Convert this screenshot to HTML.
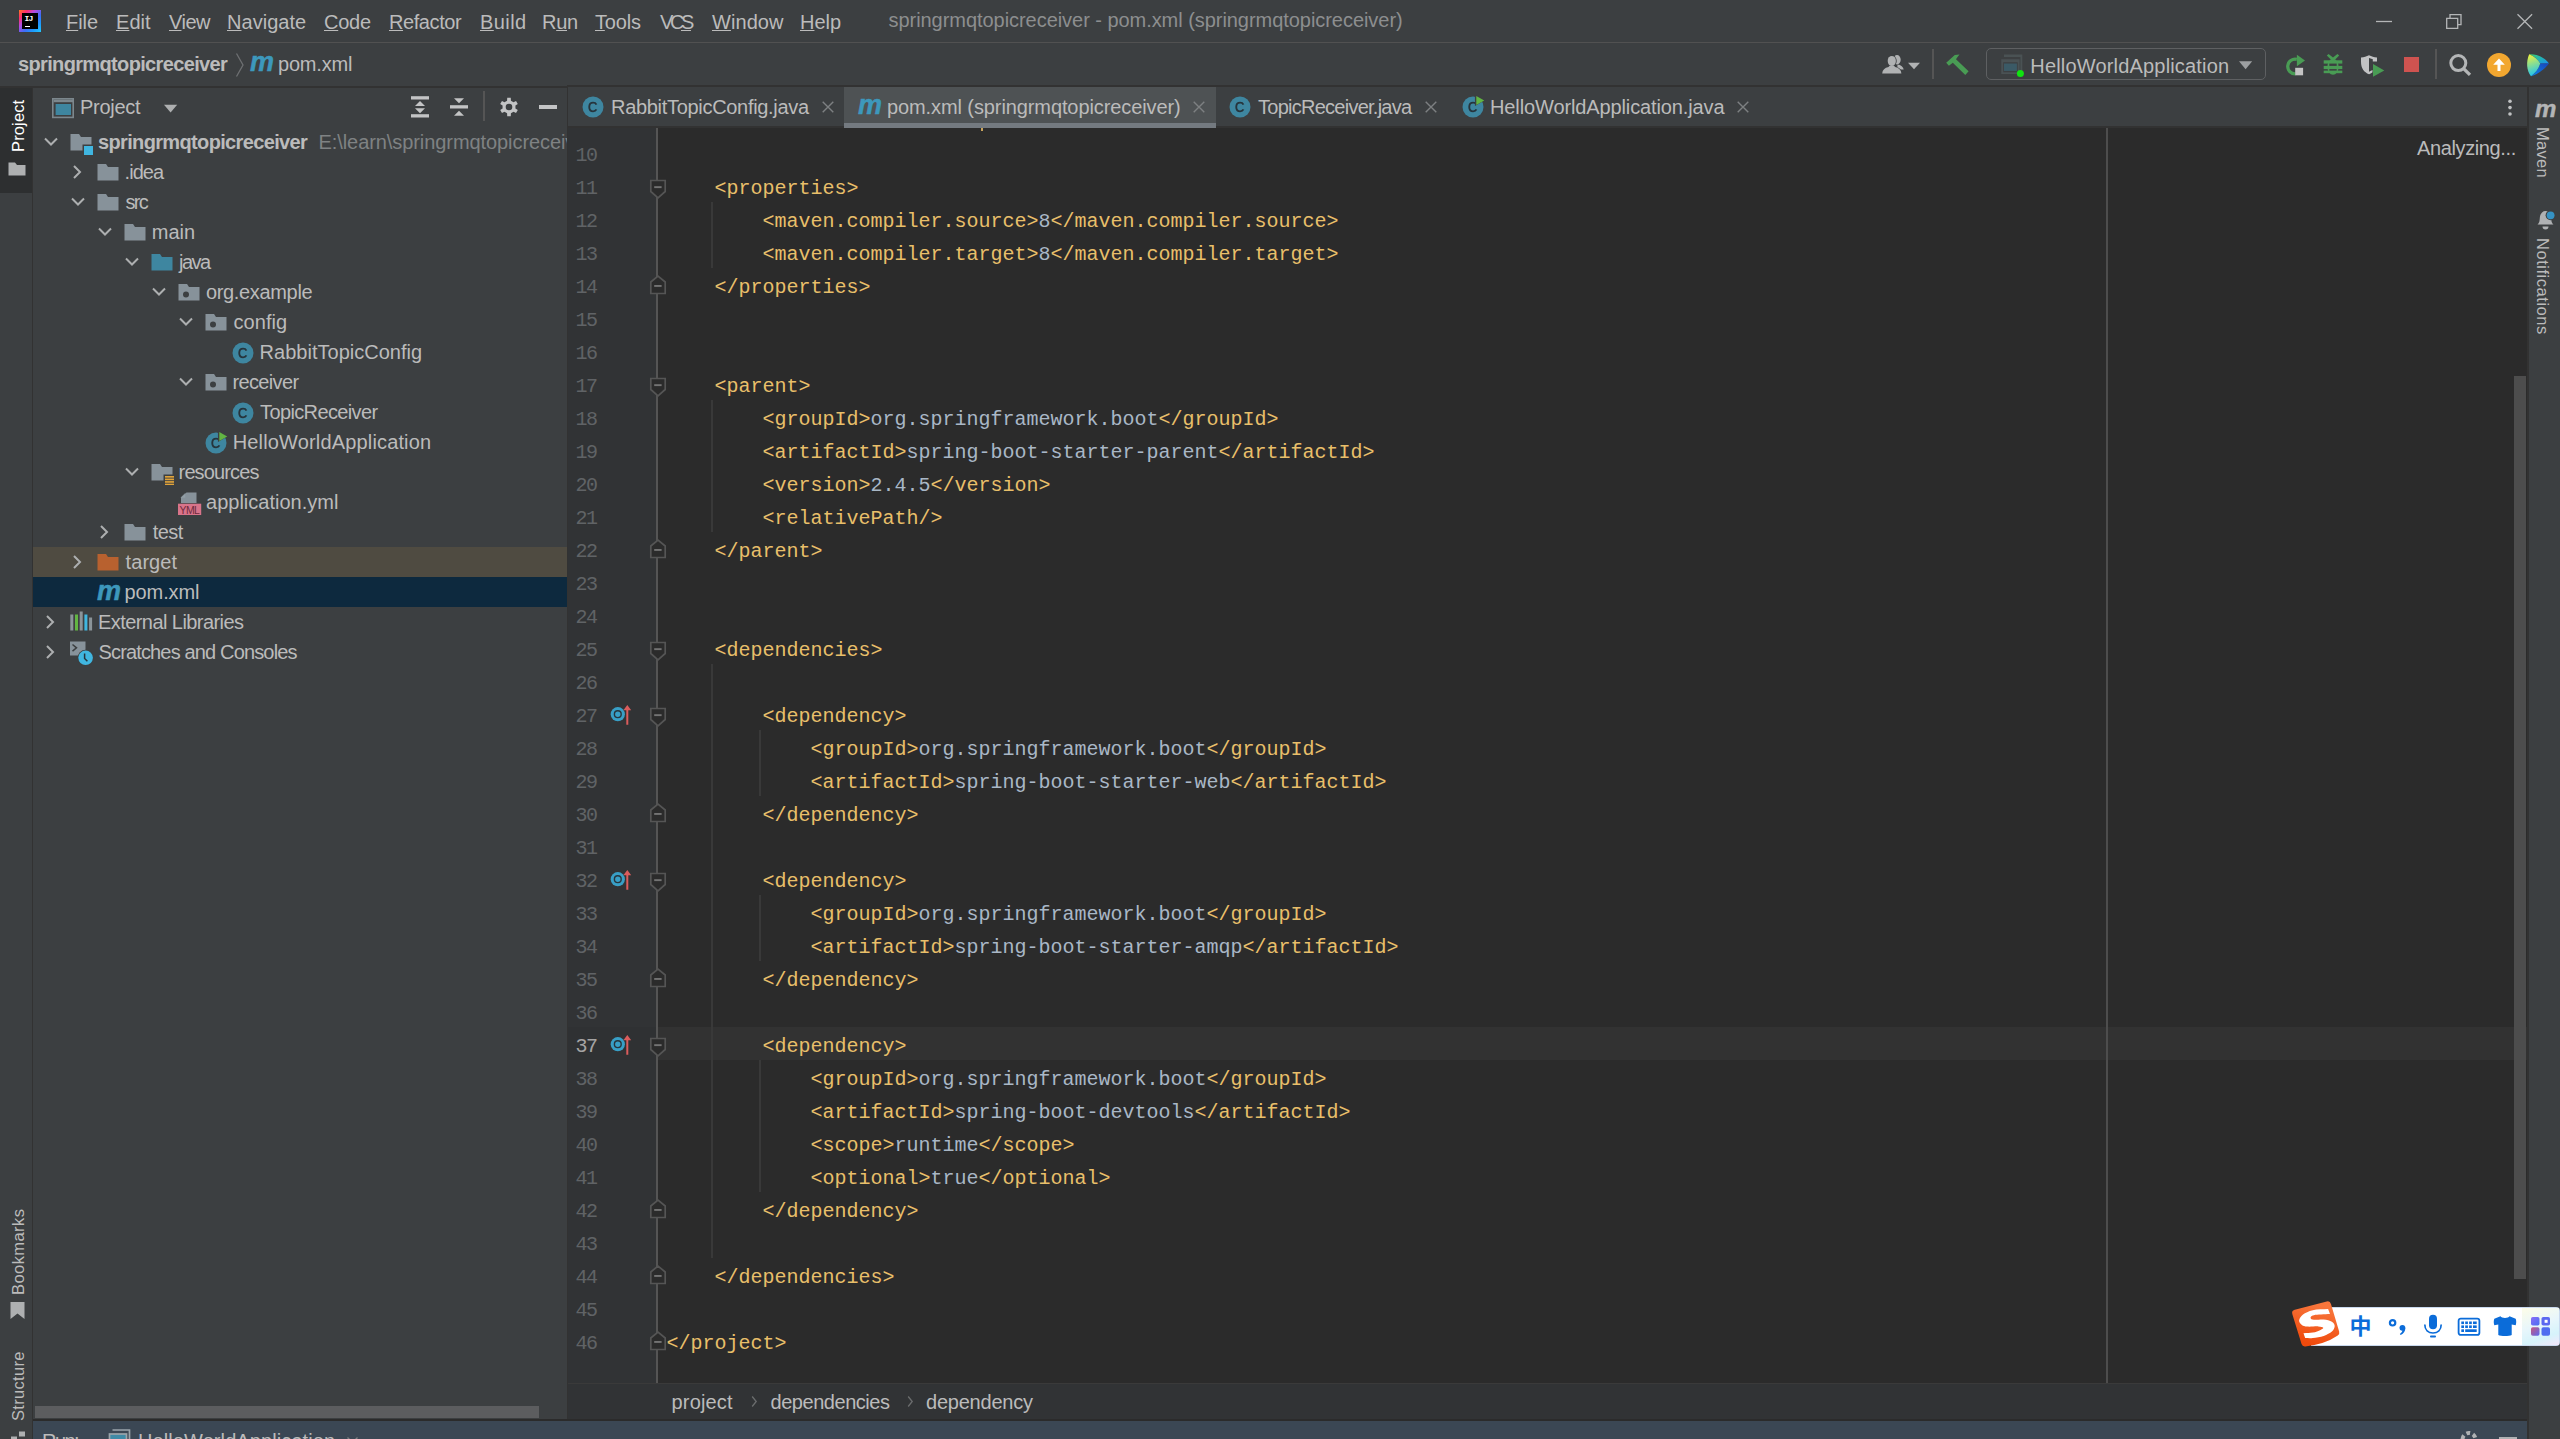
<!DOCTYPE html>
<html lang="en"><head><meta charset="utf-8"><title>springrmqtopicreceiver - pom.xml</title>
<style>
html,body{margin:0;padding:0;background:#3c3f41;}
body{width:2560px;height:1439px;position:relative;overflow:hidden;font-family:"Liberation Sans",sans-serif;}
body div,body svg,body span.t{position:absolute;}
span.t{white-space:pre;}
u{text-decoration:underline;text-decoration-thickness:1.3px;text-underline-offset:0.5px;text-decoration-skip-ink:none;}
svg{overflow:visible;}
.mi{-webkit-text-stroke:0.5px currentColor}
.ln,.cl{position:absolute;font:20px 'Liberation Mono',monospace;line-height:33px;white-space:pre;padding-top:3px;height:30px}
.ln{left:568px;width:28.8px;text-align:right;letter-spacing:-1.3px}
.cl{color:#e8bf6a}
</style></head>
<body>
<div style="left:0px;top:42px;width:2560px;height:1px;background:#515151;"></div>
<div style="left:0px;top:87px;width:32px;height:1352px;background:#3c3f41;"></div>
<div style="left:0px;top:88px;width:32px;height:105px;background:#2d2f30;"></div>
<div style="left:32px;top:87px;width:1px;height:1352px;background:#323232;"></div>
<div style="left:33px;top:87px;width:534px;height:1333px;background:#3c3f41;"></div>
<div style="left:567px;top:87px;width:1px;height:1333px;background:#323232;"></div>
<div style="left:568px;top:87px;width:1960px;height:39px;background:#3c3f41;"></div>
<div style="left:568px;top:126px;width:1960px;height:2px;background:#323232;"></div>
<div style="left:568px;top:128px;width:1960px;height:1255px;background:#2b2b2b;"></div>
<div style="left:568px;top:128px;width:88px;height:1255px;background:#313335;"></div>
<div style="left:568px;top:1383px;width:1960px;height:1px;background:#3a3a3a;"></div>
<div style="left:568px;top:1384px;width:1960px;height:36px;background:#313335;"></div>
<div style="left:0px;top:86px;width:567px;height:2px;background:#323232;"></div>
<div style="left:567px;top:85px;width:1993px;height:2px;background:#323232;"></div>
<div style="left:2527px;top:87px;width:2px;height:1352px;background:#323232;"></div>
<div style="left:2529px;top:87px;width:31px;height:1352px;background:#3c3f41;"></div>
<div style="left:33px;top:1419px;width:2494px;height:2px;background:#2b2b2b;"></div>
<div style="left:33px;top:1421px;width:2494px;height:18px;background:#3b4754;"></div>
<span class="t" style="left:66.00px;top:12.00px;font:20px 'Liberation Sans', sans-serif;line-height:1;color:#bbbbbb;letter-spacing:-0.035px;"><u>F</u>ile</span>
<span class="t" style="left:116.00px;top:12.00px;font:20px 'Liberation Sans', sans-serif;line-height:1;color:#bbbbbb;letter-spacing:0.031px;"><u>E</u>dit</span>
<span class="t" style="left:169.00px;top:12.00px;font:20px 'Liberation Sans', sans-serif;line-height:1;color:#bbbbbb;letter-spacing:-0.515px;"><u>V</u>iew</span>
<span class="t" style="left:227.00px;top:12.00px;font:20px 'Liberation Sans', sans-serif;line-height:1;color:#bbbbbb;letter-spacing:0.027px;"><u>N</u>avigate</span>
<span class="t" style="left:324.00px;top:12.00px;font:20px 'Liberation Sans', sans-serif;line-height:1;color:#bbbbbb;letter-spacing:-0.230px;"><u>C</u>ode</span>
<span class="t" style="left:389.00px;top:12.00px;font:20px 'Liberation Sans', sans-serif;line-height:1;color:#bbbbbb;letter-spacing:-0.418px;"><u>R</u>efactor</span>
<span class="t" style="left:480.00px;top:12.00px;font:20px 'Liberation Sans', sans-serif;line-height:1;color:#bbbbbb;letter-spacing:0.413px;"><u>B</u>uild</span>
<span class="t" style="left:542.00px;top:12.00px;font:20px 'Liberation Sans', sans-serif;line-height:1;color:#bbbbbb;letter-spacing:-0.283px;">R<u>u</u>n</span>
<span class="t" style="left:595.00px;top:12.00px;font:20px 'Liberation Sans', sans-serif;line-height:1;color:#bbbbbb;letter-spacing:-0.172px;"><u>T</u>ools</span>
<span class="t" style="left:660.00px;top:12.00px;font:20px 'Liberation Sans', sans-serif;line-height:1;color:#bbbbbb;letter-spacing:-3.392px;">VC<u>S</u></span>
<span class="t" style="left:712.00px;top:12.00px;font:20px 'Liberation Sans', sans-serif;line-height:1;color:#bbbbbb;letter-spacing:0.062px;"><u>W</u>indow</span>
<span class="t" style="left:800.00px;top:12.00px;font:20px 'Liberation Sans', sans-serif;line-height:1;color:#bbbbbb;"><u>H</u>elp</span>
<span class="t" style="left:888.50px;top:10.00px;font:20px 'Liberation Sans', sans-serif;line-height:1;color:#8c8e8f;letter-spacing:-0.047px;">springrmqtopicreceiver - pom.xml (springrmqtopicreceiver)</span>
<div style="left:19px;top:10px;width:22px;height:22px;background:linear-gradient(135deg,#ff7a1f 0%,#fe2d6c 20%,#b64be0 38%,#3d6df7 60%,#1c9cfb 80%,#22c8fd 100%)"></div>
<div style="left:22px;top:13px;width:16px;height:16px;background:#000"></div>
<span class="t" style="left:24.40px;top:15.00px;font:bold 8px 'Liberation Mono', monospace;line-height:1;color:#ffffff;letter-spacing:-0.801px;">IJ</span>
<div style="left:24.5px;top:25.5px;width:5px;height:1.2px;background:#ffffff;"></div>
<svg style="left:2370px;top:8px;" width="180" height="28" viewBox="0 0 180 28"><path d="M6 13.5h16" stroke="#b4b6b7" stroke-width="1.3" fill="none"/><path d="M76.7 10.300h11v10h-11z M80 10v-3.300h11v10h-3.300" stroke="#b4b6b7" stroke-width="1.3" fill="none"/><path d="M147.5 6.2l14.6 14.6M162.1 6.2l-14.6 14.6" stroke="#b4b6b7" stroke-width="1.3" fill="none"/></svg>
<span class="t" style="left:18.00px;top:54.25px;font:bold 20px 'Liberation Sans', sans-serif;line-height:1;color:#bbbbbb;letter-spacing:-0.649px;">springrmqtopicreceiver</span>
<svg style="left:234px;top:52px;" width="12" height="26" viewBox="0 0 12 26"><path d="M2.5 1.5l6.5 11.5l-6.5 11.5" stroke="#6e7072" stroke-width="1.3" fill="none"/></svg>
<span class="t mi" style="left:250.00px;top:49.05px;font:italic bold 27px 'Liberation Sans', sans-serif;line-height:1;color:#3d98bc;">m</span>
<span class="t" style="left:278.00px;top:54.25px;font:20px 'Liberation Sans', sans-serif;line-height:1;color:#bbbbbb;letter-spacing:-0.187px;">pom.xml</span>
<svg style="left:1880px;top:52px;" width="44" height="26" viewBox="0 0 44 26"><ellipse cx="17" cy="7.700" rx="3.700" ry="4.700" fill="#b0b2b3"/><path d="M17.500 12.500c3.500 0.500 5.800 2.300 6.200 5h-6.500z" fill="#b0b2b3"/><ellipse cx="11.800" cy="8.900" rx="4.900" ry="5.800" fill="#3c3f41"/><path d="M1.200 22.500c0-4.500 3-7 7.300-8h6.600c4.300 1 7.300 3.500 7.300 8z" fill="#3c3f41"/><ellipse cx="11.800" cy="8.900" rx="4.100" ry="5" fill="#b0b2b3"/><path d="M2.200 21.500c0.200-3.500 2.600-5.600 6.300-6.400l1.300-1.500h4l1.300 1.500c3.700 0.800 6.100 2.900 6.300 6.400z" fill="#b0b2b3"/><path d="M28 10.800h12l-6 6.400z" fill="#b0b2b3"/></svg>
<div style="left:1932px;top:49px;width:2px;height:30px;background:#555555;"></div>
<svg style="left:1944px;top:52px;" width="28" height="26" viewBox="0 0 28 26"><path d="M2.200 10.700L10.800 2.900L15.500 2.500L13.500 4.900L12 7.200L24.600 19.300L21.300 23.100L8.800 10.800L4.900 13.700Z" fill="#499c54"/></svg>
<div style="left:1986px;top:48px;width:278px;height:30px;border:1.5px solid #5e6062;border-radius:5px"></div>
<svg style="left:2000px;top:53px;" width="26" height="26" viewBox="0 0 26 26"><path d="M4 1.550h18.300v16.400h-1.900v-14h-16.400z" fill="#4a5254"/><path fill-rule="evenodd" d="M1.250 6.200h18.350v14.900h-18.350z M3.200 9.300v9.900h14.500v-9.900z" fill="#4a5254"/><rect x="4" y="10.500" width="12.900" height="7.450" fill="#3b5a66"/><circle cx="20.400" cy="20.500" r="3.500" fill="#10e410"/></svg>
<span class="t" style="left:2030.30px;top:55.50px;font:20px 'Liberation Sans', sans-serif;line-height:1;color:#bbbbbb;letter-spacing:0.177px;">HelloWorldApplication</span>
<svg style="left:2238px;top:60px;" width="16" height="10" viewBox="0 0 16 10"><path d="M1 1.200h13.200l-6.600 8z" fill="#9c9fa1"/></svg>
<svg style="left:2283px;top:53px;" width="24" height="24" viewBox="0 0 24 24"><path d="M13.800 6.300a7.400 7.400 0 1 0 -1.300 14.600" stroke="#499c54" stroke-width="3.300" fill="none"/><path d="M13.900 1.800l8.100 5.600l-8.100 5.900z" fill="#499c54"/><rect x="12.200" y="14.800" width="7.900" height="7.500" fill="#c4c4c4"/></svg>
<svg style="left:2322px;top:53px;" width="22" height="24" viewBox="0 0 22 24"><g fill="#499c54"><ellipse cx="11" cy="13.800" rx="5.600" ry="8"/><path d="M4.800 2.600l1.800-1.700l4.400 3.600l4.400-3.600l1.800 1.700l-4 4h-4.400z"/><rect x="1.700" y="7.300" width="18.600" height="3.300"/><rect x="1.700" y="12.900" width="18.600" height="3.200"/><rect x="1.700" y="17.600" width="18.600" height="2.600"/></g><rect x="7.300" y="10.600" width="7.400" height="2.300" fill="#3c3f41"/><rect x="7.300" y="16.100" width="7.400" height="1.500" fill="#3c3f41"/></svg>
<svg style="left:2359px;top:53px;" width="27" height="25" viewBox="0 0 27 25"><path d="M2 4.500c3-0.200 5.500-1 8-2.200c2.500 1.200 5 2 8 2.200v4h-4.200v-2.200l-3.800-1.300v13.800l3.500-1.700v2.200c-1.300 1-2.600 1.700-3.500 2c-5-2-8-6-8-12.500z" fill="#c2c3c4"/><path d="M14 11l11.300 6.400l-11.300 6.400z" fill="#499c54"/></svg>
<div style="left:2403.5px;top:57.4px;width:15.3px;height:15.1px;background:#cf5350;"></div>
<div style="left:2435px;top:49px;width:2px;height:30px;background:#555555;"></div>
<svg style="left:2446px;top:50px;" width="28" height="28" viewBox="0 0 28 28"><circle cx="12.300" cy="13.100" r="7.500" stroke="#b4b6b7" stroke-width="3" fill="none"/><path d="M17.600 18.600l6.400 6.300" stroke="#b4b6b7" stroke-width="3.300" fill="none"/></svg>
<svg style="left:2486px;top:52px;" width="26" height="26" viewBox="0 0 26 26"><circle cx="13" cy="13" r="12" fill="#f2a730"/><path d="M13 6.500l5.800 6.300h-4.300v6.200h-3v-6.200h-4.300z" fill="#ffffff"/></svg>
<svg style="left:2526px;top:52px;" width="26" height="27" viewBox="0 0 26 27"><defs><linearGradient id="cg1" x1="0.100" y1="0" x2="0.300" y2="1"><stop offset="0" stop-color="#f6f437"/><stop offset="0.500" stop-color="#86dd94"/><stop offset="1" stop-color="#1fc4f1"/></linearGradient><linearGradient id="cg2" x1="0" y1="0" x2="1" y2="1"><stop offset="0" stop-color="#3fd06a"/><stop offset="0.500" stop-color="#22b4b4"/><stop offset="1" stop-color="#1a8ef0"/></linearGradient><linearGradient id="cg3" x1="1" y1="0" x2="0" y2="1"><stop offset="0" stop-color="#1a43b8"/><stop offset="1" stop-color="#0d86e8"/></linearGradient></defs><path d="M3.200 2.200c7.500-0.600 15.500 3.300 19.800 9.300l-8.800 0.100c-2.500-4.500-6.500-7.800-11-9.400z" fill="url(#cg2)"/><path d="M23 11.500c-4 5.500-11 10.500-18 12.800c4-2.500 7.500-7 9.200-12.700z" fill="url(#cg3)"/><path d="M3.200 2.200c5 2 9 5.500 11 9.400c-1.700 5.500-5.200 10-9.200 12.700c-4.500-5.500-5-15-1.800-22.100z" fill="url(#cg1)"/></svg>
<div style="left:33px;top:547px;width:534px;height:30px;background:#4f4b41;"></div>
<div style="left:33px;top:577px;width:534px;height:30px;background:#0d293e;"></div>
<svg style="left:42.5px;top:134px;" width="18" height="16" viewBox="0 0 18 16"><path d="M2 4.500l6 6l6-6" stroke="#adafb0" stroke-width="2" fill="none"/></svg>
<svg style="left:68.5px;top:130.8px;" width="24" height="24" viewBox="0 0 16 16"><path d="M1 2H6.700L7.980 4H15V9H9V13H1Z" fill="#87929a"/><rect x="10" y="10" width="6" height="6" fill="#40b6e0"/></svg>
<span class="t" style="left:98.00px;top:131.75px;font:bold 20px 'Liberation Sans', sans-serif;line-height:1;color:#bbbbbb;letter-spacing:-0.649px;">springrmqtopicreceiver</span>
<svg style="left:71.5px;top:163px;" width="14" height="18" viewBox="0 0 14 18"><path d="M2 3l6 6l-6 6" stroke="#adafb0" stroke-width="2" fill="none"/></svg>
<svg style="left:95.5px;top:160.8px;" width="24" height="24" viewBox="0 0 16 16"><path d="M1 2H6.7L7.98 4H15V13H1Z" fill="#87929a"/></svg>
<span class="t" style="left:124.60px;top:161.75px;font:20px 'Liberation Sans', sans-serif;line-height:1;color:#bbbbbb;letter-spacing:-0.962px;">.idea</span>
<svg style="left:69.5px;top:194px;" width="18" height="16" viewBox="0 0 18 16"><path d="M2 4.500l6 6l6-6" stroke="#adafb0" stroke-width="2" fill="none"/></svg>
<svg style="left:95.5px;top:190.8px;" width="24" height="24" viewBox="0 0 16 16"><path d="M1 2H6.7L7.98 4H15V13H1Z" fill="#87929a"/></svg>
<span class="t" style="left:125.60px;top:191.75px;font:20px 'Liberation Sans', sans-serif;line-height:1;color:#bbbbbb;letter-spacing:-1.755px;">src</span>
<svg style="left:96.5px;top:224px;" width="18" height="16" viewBox="0 0 18 16"><path d="M2 4.500l6 6l6-6" stroke="#adafb0" stroke-width="2" fill="none"/></svg>
<svg style="left:122.5px;top:220.8px;" width="24" height="24" viewBox="0 0 16 16"><path d="M1 2H6.7L7.98 4H15V13H1Z" fill="#87929a"/></svg>
<span class="t" style="left:151.75px;top:221.75px;font:20px 'Liberation Sans', sans-serif;line-height:1;color:#bbbbbb;letter-spacing:0.008px;">main</span>
<svg style="left:123.5px;top:254px;" width="18" height="16" viewBox="0 0 18 16"><path d="M2 4.500l6 6l6-6" stroke="#adafb0" stroke-width="2" fill="none"/></svg>
<svg style="left:149.5px;top:250.8px;" width="24" height="24" viewBox="0 0 16 16"><path d="M1 2H6.7L7.98 4H15V13H1Z" fill="#3e86a0"/></svg>
<span class="t" style="left:179.00px;top:251.75px;font:20px 'Liberation Sans', sans-serif;line-height:1;color:#bbbbbb;letter-spacing:-1.555px;">java</span>
<svg style="left:150.5px;top:284px;" width="18" height="16" viewBox="0 0 18 16"><path d="M2 4.500l6 6l6-6" stroke="#adafb0" stroke-width="2" fill="none"/></svg>
<svg style="left:176.5px;top:280.8px;" width="24" height="24" viewBox="0 0 16 16"><path fill-rule="evenodd" d="M1 2H6.7L7.98 4H15V13H1Z M6 11A2 2 0 1 0 6 7A2 2 0 0 0 6 11Z" fill="#87929a"/></svg>
<span class="t" style="left:206.00px;top:281.75px;font:20px 'Liberation Sans', sans-serif;line-height:1;color:#bbbbbb;letter-spacing:-0.344px;">org.example</span>
<svg style="left:177.5px;top:314px;" width="18" height="16" viewBox="0 0 18 16"><path d="M2 4.500l6 6l6-6" stroke="#adafb0" stroke-width="2" fill="none"/></svg>
<svg style="left:203.5px;top:310.8px;" width="24" height="24" viewBox="0 0 16 16"><path fill-rule="evenodd" d="M1 2H6.7L7.98 4H15V13H1Z M6 11A2 2 0 1 0 6 7A2 2 0 0 0 6 11Z" fill="#87929a"/></svg>
<span class="t" style="left:233.50px;top:311.75px;font:20px 'Liberation Sans', sans-serif;line-height:1;color:#bbbbbb;letter-spacing:0.051px;">config</span>
<svg style="left:230.5px;top:340.8px;" width="24" height="24" viewBox="0 0 16 16"><circle cx="8" cy="8" r="7" fill="#3e86a0"/><path d="M10.300 9.600c-0.400 0.800-1.200 1.300-2.200 1.300c-1.500 0-2.600-1.200-2.600-2.900s1.100-2.900 2.600-2.900c1 0 1.800 0.500 2.200 1.300" stroke="#26343c" stroke-width="1.250" fill="none"/></svg>
<span class="t" style="left:259.60px;top:341.75px;font:20px 'Liberation Sans', sans-serif;line-height:1;color:#bbbbbb;letter-spacing:0.013px;">RabbitTopicConfig</span>
<svg style="left:177.5px;top:374px;" width="18" height="16" viewBox="0 0 18 16"><path d="M2 4.500l6 6l6-6" stroke="#adafb0" stroke-width="2" fill="none"/></svg>
<svg style="left:203.5px;top:370.8px;" width="24" height="24" viewBox="0 0 16 16"><path fill-rule="evenodd" d="M1 2H6.7L7.98 4H15V13H1Z M6 11A2 2 0 1 0 6 7A2 2 0 0 0 6 11Z" fill="#87929a"/></svg>
<span class="t" style="left:232.50px;top:371.75px;font:20px 'Liberation Sans', sans-serif;line-height:1;color:#bbbbbb;letter-spacing:-0.653px;">receiver</span>
<svg style="left:230.5px;top:400.8px;" width="24" height="24" viewBox="0 0 16 16"><circle cx="8" cy="8" r="7" fill="#3e86a0"/><path d="M10.300 9.600c-0.400 0.800-1.200 1.300-2.200 1.300c-1.500 0-2.600-1.200-2.600-2.900s1.100-2.900 2.600-2.900c1 0 1.800 0.500 2.200 1.300" stroke="#26343c" stroke-width="1.250" fill="none"/></svg>
<span class="t" style="left:260.00px;top:401.75px;font:20px 'Liberation Sans', sans-serif;line-height:1;color:#bbbbbb;letter-spacing:-0.620px;">TopicReceiver</span>
<svg style="left:203.5px;top:430.8px;" width="24" height="24" viewBox="0 0 16 16"><circle cx="8" cy="8" r="7" fill="#3e86a0"/><path d="M10.300 9.600c-0.400 0.800-1.200 1.300-2.200 1.300c-1.500 0-2.600-1.200-2.600-2.900s1.100-2.900 2.600-2.900c1 0 1.800 0.500 2.200 1.300" stroke="#26343c" stroke-width="1.250" fill="none"/><path d="M9.300 0v7.400l6.300-3.700z" fill="#3c3f41"/><path d="M10.200 0.600v6l5.300-3z" fill="#62b543"/></svg>
<span class="t" style="left:232.75px;top:431.75px;font:20px 'Liberation Sans', sans-serif;line-height:1;color:#bbbbbb;letter-spacing:0.154px;">HelloWorldApplication</span>
<svg style="left:123.5px;top:464px;" width="18" height="16" viewBox="0 0 18 16"><path d="M2 4.500l6 6l6-6" stroke="#adafb0" stroke-width="2" fill="none"/></svg>
<svg style="left:149.5px;top:460.8px;" width="24" height="24" viewBox="0 0 16 16"><path d="M1 2H6.700L7.980 4H15V9H9V13H1Z" fill="#87929a"/><g fill="#e0a33a"><rect x="10" y="10" width="6" height="1.100"/><rect x="10" y="11.700" width="6" height="1.100"/><rect x="10" y="13.400" width="6" height="1.100"/><rect x="10" y="15.100" width="6" height="0.900"/></g></svg>
<span class="t" style="left:178.60px;top:461.75px;font:20px 'Liberation Sans', sans-serif;line-height:1;color:#bbbbbb;letter-spacing:-0.877px;">resources</span>
<svg style="left:177px;top:491px;" width="26" height="25" viewBox="0 0 26 25"><path d="M9.500 1.500h10v10.500h-15.500v-5.500z" fill="#87929a"/><path d="M8.300 1.800v5h-5z" fill="#9aa7b0" opacity="0.550"/><rect x="1" y="12.700" width="23.200" height="11.300" fill="#d9748a"/></svg>
<span class="t" style="left:179.50px;top:505.07px;font:10.5px 'Liberation Sans', sans-serif;line-height:1;color:#6e2a3c;letter-spacing:-0.625px;">YML</span>
<span class="t" style="left:206.00px;top:491.75px;font:20px 'Liberation Sans', sans-serif;line-height:1;color:#bbbbbb;letter-spacing:0.011px;">application.yml</span>
<svg style="left:98.5px;top:523px;" width="14" height="18" viewBox="0 0 14 18"><path d="M2 3l6 6l-6 6" stroke="#adafb0" stroke-width="2" fill="none"/></svg>
<svg style="left:122.5px;top:520.8px;" width="24" height="24" viewBox="0 0 16 16"><path d="M1 2H6.7L7.98 4H15V13H1Z" fill="#87929a"/></svg>
<span class="t" style="left:152.75px;top:521.75px;font:20px 'Liberation Sans', sans-serif;line-height:1;color:#bbbbbb;letter-spacing:-0.560px;">test</span>
<svg style="left:71.5px;top:553px;" width="14" height="18" viewBox="0 0 14 18"><path d="M2 3l6 6l-6 6" stroke="#adafb0" stroke-width="2" fill="none"/></svg>
<svg style="left:95.5px;top:550.8px;" width="24" height="24" viewBox="0 0 16 16"><path d="M1 2H6.7L7.98 4H15V13H1Z" fill="#b8612f"/></svg>
<span class="t" style="left:125.60px;top:551.75px;font:20px 'Liberation Sans', sans-serif;line-height:1;color:#bbbbbb;letter-spacing:0.063px;">target</span>
<span class="t mi" style="left:97.00px;top:578.35px;font:italic bold 27px 'Liberation Sans', sans-serif;line-height:1;color:#3d98bc;">m</span>
<span class="t" style="left:124.60px;top:581.75px;font:20px 'Liberation Sans', sans-serif;line-height:1;color:#bbbbbb;letter-spacing:-0.121px;">pom.xml</span>
<svg style="left:44.5px;top:613px;" width="14" height="18" viewBox="0 0 14 18"><path d="M2 3l6 6l-6 6" stroke="#adafb0" stroke-width="2" fill="none"/></svg>
<svg style="left:69px;top:610px;" width="24" height="24" viewBox="0 0 24 24"><g><rect x="1.300" y="4.500" width="3" height="16" fill="#8b9499"/><rect x="6" y="4.500" width="3" height="16" fill="#62b543"/><rect x="10.700" y="1.500" width="3" height="19" fill="#8b9499"/><rect x="15.400" y="4.500" width="3" height="16" fill="#40b6e0"/><rect x="20.100" y="7.500" width="3" height="13" fill="#8b9499"/></g></svg>
<span class="t" style="left:98.00px;top:611.75px;font:20px 'Liberation Sans', sans-serif;line-height:1;color:#bbbbbb;letter-spacing:-0.566px;">External Libraries</span>
<svg style="left:44.5px;top:643px;" width="14" height="18" viewBox="0 0 14 18"><path d="M2 3l6 6l-6 6" stroke="#adafb0" stroke-width="2" fill="none"/></svg>
<svg style="left:69px;top:640px;" width="26" height="28" viewBox="0 0 26 28"><path d="M1 1.500h15.500v14h-15.500z" fill="#87929a"/><path d="M3.500 4.500l4 3.300l-4 3.300" stroke="#3c3f41" stroke-width="1.500" fill="none"/><circle cx="16.600" cy="17.800" r="8" fill="#3c3f41"/><circle cx="16.600" cy="17.800" r="7.300" fill="#40b6e0"/><path d="M15.600 13.500v5l2.800 2.800" stroke="#26343c" stroke-width="1.500" fill="none"/></svg>
<span class="t" style="left:98.50px;top:641.75px;font:20px 'Liberation Sans', sans-serif;line-height:1;color:#bbbbbb;letter-spacing:-0.847px;">Scratches and Consoles</span>
<div style="left:310px;top:128px;width:257px;height:29px;overflow:hidden"><span class="t" style="left:8.50px;top:3.75px;font:20px 'Liberation Sans', sans-serif;line-height:1;color:#7f8283;letter-spacing:-0.076px;">E:\learn\springrmqtopicreceiver</span></div>
<svg style="left:52px;top:97.5px;" width="23" height="21" viewBox="0 0 23 21"><rect x="0.800" y="0.800" width="20.400" height="18.600" fill="none" stroke="#7c878d" stroke-width="1.600"/><rect x="1.600" y="1.600" width="19.400" height="2.600" fill="#7c878d"/><rect x="3.600" y="6" width="15.400" height="11" fill="#3e86a0"/></svg>
<span class="t" style="left:80.00px;top:97.00px;font:20px 'Liberation Sans', sans-serif;line-height:1;color:#bbbbbb;letter-spacing:-0.282px;">Project</span>
<svg style="left:163px;top:104px;" width="16" height="10" viewBox="0 0 16 10"><path d="M1 0.800h13.200l-6.600 7.800z" fill="#adafb0"/></svg>
<svg style="left:410px;top:95px;" width="20" height="24" viewBox="0 0 20 24"><g fill="#c3c4c5"><rect x="1" y="1.200" width="18" height="3.300"/><rect x="1" y="19.200" width="18" height="3.300"/><path d="M10 6l5 5h-10z"/><path d="M10 18.200l5-5h-10z"/></g></svg>
<svg style="left:449px;top:95px;" width="20" height="24" viewBox="0 0 20 24"><g fill="#c3c4c5"><rect x="1" y="10.200" width="18" height="3.300"/><path d="M10 8.200l5-5h-10z"/><path d="M10 15.800l5 5h-10z"/></g></svg>
<div style="left:483px;top:91px;width:2px;height:30px;background:#555555;"></div>
<svg style="left:499px;top:97px;" width="20" height="20" viewBox="0 0 20 20"><path fill-rule="evenodd" d="M8.07 3.69L8.23 0.87L11.77 0.87L11.93 3.69L14.50 5.17L17.02 3.90L18.79 6.97L16.43 8.52L16.43 11.48L18.79 13.03L17.02 16.10L14.50 14.83L11.93 16.31L11.77 19.13L8.23 19.13L8.07 16.31L5.50 14.83L2.98 16.10L1.21 13.03L3.57 11.48L3.57 8.52L1.21 6.97L2.98 3.90L5.50 5.17Z M10 13.300A3.300 3.300 0 1 0 10 6.700A3.300 3.300 0 0 0 10 13.300Z" fill="#c3c4c5"/></svg>
<div style="left:539px;top:105.3px;width:18px;height:3.5px;background:#c3c4c5;"></div>
<span class="t" style="left:10.28px;top:152.40px;font:16.5px 'Liberation Sans', sans-serif;line-height:1;color:#ffffff;transform:rotate(-90deg);transform-origin:0 0;letter-spacing:0.139px;">Project</span>
<svg style="left:8.3px;top:162px;" width="18" height="14" viewBox="0 0 18 14"><path d="M0.500 0.500h6.500l2 2.500h8.500v10.500h-17z" fill="#aeb0b1"/></svg>
<span class="t" style="left:10.28px;top:1294.50px;font:16.5px 'Liberation Sans', sans-serif;line-height:1;color:#bbbbbb;transform:rotate(-90deg);transform-origin:0 0;letter-spacing:0.428px;">Bookmarks</span>
<svg style="left:10px;top:1302px;" width="15" height="18" viewBox="0 0 15 18"><path d="M0.500 0h14v17l-7-5.500l-7 5.500z" fill="#aeb0b1"/></svg>
<span class="t" style="left:10.28px;top:1420.70px;font:16.5px 'Liberation Sans', sans-serif;line-height:1;color:#bbbbbb;transform:rotate(-90deg);transform-origin:0 0;letter-spacing:0.304px;">Structure</span>
<svg style="left:10px;top:1431px;" width="16" height="8" viewBox="0 0 16 8"><rect x="9" y="0.500" width="6" height="5" fill="#aeb0b1"/><rect x="1" y="5.500" width="6" height="3" fill="#aeb0b1"/></svg>
<div style="left:35px;top:1406px;width:504px;height:12px;background:#5c5d5f;"></div>
<div style="left:844px;top:87px;width:372px;height:39px;background:#4e5254;"></div>
<div style="left:844px;top:123px;width:372px;height:5px;background:#747a80;"></div>
<svg style="left:581px;top:94.5px;" width="24" height="24" viewBox="0 0 16 16"><circle cx="8" cy="8" r="7" fill="#3e86a0"/><path d="M10.300 9.600c-0.400 0.800-1.200 1.300-2.200 1.300c-1.500 0-2.600-1.200-2.600-2.900s1.100-2.900 2.600-2.900c1 0 1.800 0.500 2.200 1.300" stroke="#26343c" stroke-width="1.250" fill="none"/></svg>
<span class="t" style="left:611.00px;top:97.20px;font:20px 'Liberation Sans', sans-serif;line-height:1;color:#bbbbbb;letter-spacing:-0.307px;">RabbitTopicConfig.java</span>
<svg style="left:821.8px;top:100.8px;" width="12" height="12" viewBox="0 0 12 12"><path d="M0.700 0.700l10.600 10.600M11.300 0.700l-10.600 10.600" stroke="#7d8082" stroke-width="1.400" fill="none"/></svg>
<span class="t mi" style="left:858.00px;top:92.25px;font:italic bold 27px 'Liberation Sans', sans-serif;line-height:1;color:#3d98bc;">m</span>
<span class="t" style="left:887.00px;top:97.20px;font:20px 'Liberation Sans', sans-serif;line-height:1;color:#bbbbbb;letter-spacing:-0.099px;">pom.xml (springrmqtopicreceiver)</span>
<svg style="left:1193.3px;top:100.8px;" width="12" height="12" viewBox="0 0 12 12"><path d="M0.700 0.700l10.600 10.600M11.300 0.700l-10.600 10.600" stroke="#7d8082" stroke-width="1.400" fill="none"/></svg>
<svg style="left:1227.5px;top:94.5px;" width="24" height="24" viewBox="0 0 16 16"><circle cx="8" cy="8" r="7" fill="#3e86a0"/><path d="M10.300 9.600c-0.400 0.800-1.200 1.300-2.200 1.300c-1.500 0-2.600-1.200-2.600-2.900s1.100-2.900 2.600-2.900c1 0 1.800 0.500 2.200 1.300" stroke="#26343c" stroke-width="1.250" fill="none"/></svg>
<span class="t" style="left:1258.00px;top:97.20px;font:20px 'Liberation Sans', sans-serif;line-height:1;color:#bbbbbb;letter-spacing:-0.743px;">TopicReceiver.java</span>
<svg style="left:1425.3px;top:100.8px;" width="12" height="12" viewBox="0 0 12 12"><path d="M0.700 0.700l10.600 10.600M11.300 0.700l-10.600 10.600" stroke="#7d8082" stroke-width="1.400" fill="none"/></svg>
<svg style="left:1461px;top:94.5px;" width="24" height="24" viewBox="0 0 16 16"><circle cx="8" cy="8" r="7" fill="#3e86a0"/><path d="M10.300 9.600c-0.400 0.800-1.200 1.300-2.200 1.300c-1.500 0-2.600-1.200-2.600-2.900s1.100-2.900 2.600-2.900c1 0 1.800 0.500 2.200 1.300" stroke="#26343c" stroke-width="1.250" fill="none"/><path d="M9.300 0v7.400l6.300-3.700z" fill="#3c3f41"/><path d="M10.200 0.600v6l5.300-3z" fill="#62b543"/></svg>
<span class="t" style="left:1490.00px;top:97.20px;font:20px 'Liberation Sans', sans-serif;line-height:1;color:#bbbbbb;letter-spacing:-0.116px;">HelloWorldApplication.java</span>
<svg style="left:1736.8px;top:100.8px;" width="12" height="12" viewBox="0 0 12 12"><path d="M0.700 0.700l10.600 10.600M11.300 0.700l-10.600 10.600" stroke="#7d8082" stroke-width="1.400" fill="none"/></svg>
<svg style="left:2506px;top:98px;" width="8" height="20" viewBox="0 0 8 20"><circle cx="4" cy="3.200" r="1.800" fill="#c0c2c3"/><circle cx="4" cy="9.600" r="1.800" fill="#c0c2c3"/><circle cx="4" cy="16" r="1.800" fill="#c0c2c3"/></svg>
<span class="t mi" style="left:2535.00px;top:96.90px;font:italic bold 24px 'Liberation Sans', sans-serif;line-height:1;color:#b4b5b6;">m</span>
<span class="t" style="left:2550.62px;top:126.90px;font:16.5px 'Liberation Sans', sans-serif;line-height:1;color:#bbbbbb;transform:rotate(90deg);transform-origin:0 0;letter-spacing:0.263px;">Maven</span>
<svg style="left:2536px;top:209px;" width="20" height="23" viewBox="0 0 20 23"><path d="M1.500 15.500c2.500-2 2-5 2.500-8c0.600-3.500 3-5.500 5.500-5.500s4.900 2 5.500 5.500c0.500 3 0 6 2.500 8z" fill="#afb1b3"/><path d="M6.500 17.500h6a3 3 0 0 1 -6 0z" fill="#afb1b3"/><circle cx="14.600" cy="6.300" r="5" fill="#3c3f41"/><circle cx="14.600" cy="6.300" r="3.900" fill="#3592c4"/></svg>
<span class="t" style="left:2550.62px;top:238.00px;font:16.5px 'Liberation Sans', sans-serif;line-height:1;color:#bbbbbb;transform:rotate(90deg);transform-origin:0 0;letter-spacing:0.532px;">Notifications</span>
<div style="left:568px;top:1027px;width:88px;height:33px;background:#2f3133;"></div>
<div style="left:658px;top:1027px;width:1869px;height:33px;background:#323232;"></div>
<div style="left:2106px;top:128px;width:2px;height:1255px;background:#4d4d4d;"></div>
<div style="left:711.3px;top:202px;width:1.4px;height:66px;background:#393939;"></div>
<div style="left:711.3px;top:400px;width:1.4px;height:132px;background:#393939;"></div>
<div style="left:711.3px;top:664px;width:1.4px;height:594px;background:#393939;"></div>
<div style="left:759.3px;top:730px;width:1.4px;height:66px;background:#393939;"></div>
<div style="left:759.3px;top:895px;width:1.4px;height:66px;background:#393939;"></div>
<div style="left:759.3px;top:1060px;width:1.4px;height:132px;background:#393939;"></div>
<div style="left:656px;top:128px;width:2px;height:1255px;background:#555555;"></div>
<div style="left:2514px;top:376px;width:12px;height:903px;background:#4d4d4d;"></div>
<span class="ln" style="top:136px;color:#606366">10</span>
<span class="ln" style="top:169px;color:#606366">11</span>
<span class="cl" style="left:714.5px;top:169px">&lt;properties&gt;</span>
<span class="ln" style="top:202px;color:#606366">12</span>
<span class="cl" style="left:762.5px;top:202px">&lt;maven.compiler.source&gt;<span style="color:#a9b7c6">8</span>&lt;/maven.compiler.source&gt;</span>
<span class="ln" style="top:235px;color:#606366">13</span>
<span class="cl" style="left:762.5px;top:235px">&lt;maven.compiler.target&gt;<span style="color:#a9b7c6">8</span>&lt;/maven.compiler.target&gt;</span>
<span class="ln" style="top:268px;color:#606366">14</span>
<span class="cl" style="left:714.5px;top:268px">&lt;/properties&gt;</span>
<span class="ln" style="top:301px;color:#606366">15</span>
<span class="ln" style="top:334px;color:#606366">16</span>
<span class="ln" style="top:367px;color:#606366">17</span>
<span class="cl" style="left:714.5px;top:367px">&lt;parent&gt;</span>
<span class="ln" style="top:400px;color:#606366">18</span>
<span class="cl" style="left:762.5px;top:400px">&lt;groupId&gt;<span style="color:#a9b7c6">org.springframework.boot</span>&lt;/groupId&gt;</span>
<span class="ln" style="top:433px;color:#606366">19</span>
<span class="cl" style="left:762.5px;top:433px">&lt;artifactId&gt;<span style="color:#a9b7c6">spring-boot-starter-parent</span>&lt;/artifactId&gt;</span>
<span class="ln" style="top:466px;color:#606366">20</span>
<span class="cl" style="left:762.5px;top:466px">&lt;version&gt;<span style="color:#a9b7c6">2.4.5</span>&lt;/version&gt;</span>
<span class="ln" style="top:499px;color:#606366">21</span>
<span class="cl" style="left:762.5px;top:499px">&lt;relativePath/&gt;</span>
<span class="ln" style="top:532px;color:#606366">22</span>
<span class="cl" style="left:714.5px;top:532px">&lt;/parent&gt;</span>
<span class="ln" style="top:565px;color:#606366">23</span>
<span class="ln" style="top:598px;color:#606366">24</span>
<span class="ln" style="top:631px;color:#606366">25</span>
<span class="cl" style="left:714.5px;top:631px">&lt;dependencies&gt;</span>
<span class="ln" style="top:664px;color:#606366">26</span>
<span class="ln" style="top:697px;color:#606366">27</span>
<span class="cl" style="left:762.5px;top:697px">&lt;dependency&gt;</span>
<span class="ln" style="top:730px;color:#606366">28</span>
<span class="cl" style="left:810.5px;top:730px">&lt;groupId&gt;<span style="color:#a9b7c6">org.springframework.boot</span>&lt;/groupId&gt;</span>
<span class="ln" style="top:763px;color:#606366">29</span>
<span class="cl" style="left:810.5px;top:763px">&lt;artifactId&gt;<span style="color:#a9b7c6">spring-boot-starter-web</span>&lt;/artifactId&gt;</span>
<span class="ln" style="top:796px;color:#606366">30</span>
<span class="cl" style="left:762.5px;top:796px">&lt;/dependency&gt;</span>
<span class="ln" style="top:829px;color:#606366">31</span>
<span class="ln" style="top:862px;color:#606366">32</span>
<span class="cl" style="left:762.5px;top:862px">&lt;dependency&gt;</span>
<span class="ln" style="top:895px;color:#606366">33</span>
<span class="cl" style="left:810.5px;top:895px">&lt;groupId&gt;<span style="color:#a9b7c6">org.springframework.boot</span>&lt;/groupId&gt;</span>
<span class="ln" style="top:928px;color:#606366">34</span>
<span class="cl" style="left:810.5px;top:928px">&lt;artifactId&gt;<span style="color:#a9b7c6">spring-boot-starter-amqp</span>&lt;/artifactId&gt;</span>
<span class="ln" style="top:961px;color:#606366">35</span>
<span class="cl" style="left:762.5px;top:961px">&lt;/dependency&gt;</span>
<span class="ln" style="top:994px;color:#606366">36</span>
<span class="ln" style="top:1027px;color:#a4a3a3">37</span>
<span class="cl" style="left:762.5px;top:1027px">&lt;dependency&gt;</span>
<span class="ln" style="top:1060px;color:#606366">38</span>
<span class="cl" style="left:810.5px;top:1060px">&lt;groupId&gt;<span style="color:#a9b7c6">org.springframework.boot</span>&lt;/groupId&gt;</span>
<span class="ln" style="top:1093px;color:#606366">39</span>
<span class="cl" style="left:810.5px;top:1093px">&lt;artifactId&gt;<span style="color:#a9b7c6">spring-boot-devtools</span>&lt;/artifactId&gt;</span>
<span class="ln" style="top:1126px;color:#606366">40</span>
<span class="cl" style="left:810.5px;top:1126px">&lt;scope&gt;<span style="color:#a9b7c6">runtime</span>&lt;/scope&gt;</span>
<span class="ln" style="top:1159px;color:#606366">41</span>
<span class="cl" style="left:810.5px;top:1159px">&lt;optional&gt;<span style="color:#a9b7c6">true</span>&lt;/optional&gt;</span>
<span class="ln" style="top:1192px;color:#606366">42</span>
<span class="cl" style="left:762.5px;top:1192px">&lt;/dependency&gt;</span>
<span class="ln" style="top:1225px;color:#606366">43</span>
<span class="ln" style="top:1258px;color:#606366">44</span>
<span class="cl" style="left:714.5px;top:1258px">&lt;/dependencies&gt;</span>
<span class="ln" style="top:1291px;color:#606366">45</span>
<span class="ln" style="top:1324px;color:#606366">46</span>
<span class="cl" style="left:666.5px;top:1324px">&lt;/project&gt;</span>
<div style="left:980.5px;top:128px;width:2px;height:2.5px;background:#c9a45c;"></div>
<svg style="left:648px;top:178px;" width="20" height="22" viewBox="0 0 20 22"><path d="M2.800 2.500h14.400v11l-7.200 6.300l-7.200-6.300z" fill="#2b2b2b" stroke="#555555" stroke-width="1.700"/><rect x="6.200" y="8.200" width="7.400" height="1.900" fill="#737373"/></svg>
<svg style="left:648px;top:376px;" width="20" height="22" viewBox="0 0 20 22"><path d="M2.800 2.500h14.400v11l-7.200 6.300l-7.200-6.300z" fill="#2b2b2b" stroke="#555555" stroke-width="1.700"/><rect x="6.200" y="8.200" width="7.400" height="1.900" fill="#737373"/></svg>
<svg style="left:648px;top:640px;" width="20" height="22" viewBox="0 0 20 22"><path d="M2.800 2.500h14.400v11l-7.200 6.300l-7.200-6.300z" fill="#2b2b2b" stroke="#555555" stroke-width="1.700"/><rect x="6.200" y="8.200" width="7.400" height="1.900" fill="#737373"/></svg>
<svg style="left:648px;top:706px;" width="20" height="22" viewBox="0 0 20 22"><path d="M2.800 2.500h14.400v11l-7.200 6.300l-7.200-6.300z" fill="#2b2b2b" stroke="#555555" stroke-width="1.700"/><rect x="6.200" y="8.200" width="7.400" height="1.900" fill="#737373"/></svg>
<svg style="left:648px;top:871px;" width="20" height="22" viewBox="0 0 20 22"><path d="M2.800 2.500h14.400v11l-7.200 6.300l-7.200-6.300z" fill="#2b2b2b" stroke="#555555" stroke-width="1.700"/><rect x="6.200" y="8.200" width="7.400" height="1.900" fill="#737373"/></svg>
<svg style="left:648px;top:1036px;" width="20" height="22" viewBox="0 0 20 22"><path d="M2.800 2.500h14.400v11l-7.200 6.300l-7.200-6.300z" fill="#2b2b2b" stroke="#555555" stroke-width="1.700"/><rect x="6.200" y="8.200" width="7.400" height="1.900" fill="#737373"/></svg>
<svg style="left:648px;top:274px;" width="20" height="22" viewBox="0 0 20 22"><path d="M2.800 19.500h14.400v-11.500l-7.200-6l-7.200 6z" fill="#2b2b2b" stroke="#555555" stroke-width="1.700"/><rect x="6.200" y="11" width="7.400" height="1.900" fill="#737373"/></svg>
<svg style="left:648px;top:538px;" width="20" height="22" viewBox="0 0 20 22"><path d="M2.800 19.500h14.400v-11.500l-7.200-6l-7.200 6z" fill="#2b2b2b" stroke="#555555" stroke-width="1.700"/><rect x="6.200" y="11" width="7.400" height="1.900" fill="#737373"/></svg>
<svg style="left:648px;top:802px;" width="20" height="22" viewBox="0 0 20 22"><path d="M2.800 19.500h14.400v-11.500l-7.200-6l-7.200 6z" fill="#2b2b2b" stroke="#555555" stroke-width="1.700"/><rect x="6.200" y="11" width="7.400" height="1.900" fill="#737373"/></svg>
<svg style="left:648px;top:967px;" width="20" height="22" viewBox="0 0 20 22"><path d="M2.800 19.500h14.400v-11.500l-7.200-6l-7.200 6z" fill="#2b2b2b" stroke="#555555" stroke-width="1.700"/><rect x="6.200" y="11" width="7.400" height="1.900" fill="#737373"/></svg>
<svg style="left:648px;top:1198px;" width="20" height="22" viewBox="0 0 20 22"><path d="M2.800 19.500h14.400v-11.500l-7.200-6l-7.200 6z" fill="#2b2b2b" stroke="#555555" stroke-width="1.700"/><rect x="6.200" y="11" width="7.400" height="1.900" fill="#737373"/></svg>
<svg style="left:648px;top:1264px;" width="20" height="22" viewBox="0 0 20 22"><path d="M2.800 19.500h14.400v-11.500l-7.200-6l-7.200 6z" fill="#2b2b2b" stroke="#555555" stroke-width="1.700"/><rect x="6.200" y="11" width="7.400" height="1.900" fill="#737373"/></svg>
<svg style="left:648px;top:1330px;" width="20" height="22" viewBox="0 0 20 22"><path d="M2.800 19.500h14.400v-11.500l-7.200-6l-7.200 6z" fill="#2b2b2b" stroke="#555555" stroke-width="1.700"/><rect x="6.200" y="11" width="7.400" height="1.900" fill="#737373"/></svg>
<svg style="left:609px;top:703px;" width="26" height="24" viewBox="0 0 26 24"><circle cx="8.800" cy="11.200" r="7.100" fill="#389fc6"/><circle cx="8.800" cy="11.200" r="3.400" fill="none" stroke="#27353d" stroke-width="1.400"/><path d="M18.300 2l3.900 5.300h-2.900v14.400h-2v-14.400h-2.900z" fill="#db5c5c"/></svg>
<svg style="left:609px;top:868px;" width="26" height="24" viewBox="0 0 26 24"><circle cx="8.800" cy="11.200" r="7.100" fill="#389fc6"/><circle cx="8.800" cy="11.200" r="3.400" fill="none" stroke="#27353d" stroke-width="1.400"/><path d="M18.300 2l3.900 5.300h-2.900v14.400h-2v-14.400h-2.900z" fill="#db5c5c"/></svg>
<svg style="left:609px;top:1033px;" width="26" height="24" viewBox="0 0 26 24"><circle cx="8.800" cy="11.200" r="7.100" fill="#389fc6"/><circle cx="8.800" cy="11.200" r="3.400" fill="none" stroke="#27353d" stroke-width="1.400"/><path d="M18.300 2l3.900 5.300h-2.900v14.400h-2v-14.400h-2.900z" fill="#db5c5c"/></svg>
<span class="t" style="left:2417.00px;top:138.00px;font:20px 'Liberation Sans', sans-serif;line-height:1;color:#bbbbbb;letter-spacing:-0.376px;">Analyzing...</span>
<span class="t" style="left:671.50px;top:1391.75px;font:20px 'Liberation Sans', sans-serif;line-height:1;color:#bbbbbb;letter-spacing:0.171px;">project</span>
<span class="t" style="left:770.50px;top:1391.75px;font:20px 'Liberation Sans', sans-serif;line-height:1;color:#bbbbbb;letter-spacing:-0.459px;">dependencies</span>
<span class="t" style="left:926.00px;top:1391.75px;font:20px 'Liberation Sans', sans-serif;line-height:1;color:#bbbbbb;letter-spacing:-0.220px;">dependency</span>
<svg style="left:750.5px;top:1395px;" width="8" height="14" viewBox="0 0 8 14"><path d="M1.200 1.500l4 5l-4 5" stroke="#6b6d6e" stroke-width="1.300" fill="none"/></svg>
<svg style="left:906.5px;top:1395px;" width="8" height="14" viewBox="0 0 8 14"><path d="M1.200 1.500l4 5l-4 5" stroke="#6b6d6e" stroke-width="1.300" fill="none"/></svg>
<span class="t" style="left:42.00px;top:1431.30px;font:20px 'Liberation Sans', sans-serif;line-height:1;color:#bbbbbb;letter-spacing:-1.563px;">Run:</span>
<svg style="left:108px;top:1429px;" width="24" height="12" viewBox="0 0 24 12"><path d="M4.500 1h17v11" stroke="#9aa4aa" stroke-width="1.700" fill="none"/><rect x="1.500" y="5" width="17" height="8" fill="#3f8aa6" stroke="#9aa4aa" stroke-width="1.700"/></svg>
<span class="t" style="left:138.00px;top:1431.30px;font:20px 'Liberation Sans', sans-serif;line-height:1;color:#bbbbbb;letter-spacing:0.092px;">HelloWorldApplication</span>
<svg style="left:347px;top:1436.5px;" width="12" height="4" viewBox="0 0 12 4"><path d="M0.500 0.500l5 5l5-5" stroke="#7d8082" stroke-width="1.400" fill="none"/></svg>
<svg style="left:2459px;top:1429px;" width="20" height="12" viewBox="0 0 20 12"><circle cx="10" cy="10.500" r="6.500" fill="none" stroke="#afb1b3" stroke-width="4" stroke-dasharray="3.800 3"/></svg>
<div style="left:2499px;top:1437.3px;width:18px;height:2px;background:#afb1b3;"></div>
<div style="left:2312px;top:1308px;width:247px;height:37px;background:#ffffff;border-radius:0 3px 3px 0;box-shadow:0 0 0 1px #c9d9ee"></div>
<div style="left:2522px;top:1308px;width:37px;height:37px;background:linear-gradient(160deg,#fdfde8 0%,#e8f6fb 45%,#d6f3fb 75%,#f3e6fa 100%)"></div>
<svg style="left:2280px;top:1290px;" width="70" height="62" viewBox="0 0 70 62"><defs><linearGradient id="sg" x1="0.600" y1="0" x2="0.300" y2="1"><stop offset="0" stop-color="#f8763c"/><stop offset="1" stop-color="#ef4a0c"/></linearGradient></defs><path d="M15.700 23.100L47.600 14.900L55.800 42.600Q43.500 51 24.900 52.900Z" fill="url(#sg)" stroke="url(#sg)" stroke-width="7" stroke-linejoin="round"/><path d="M48.1 19.1C43.0 19.5 37.0 19.3 32.8 20.2C28.6 21.1 25.2 22.9 23.0 24.6C20.7 26.3 19.3 28.9 19.1 30.6C19.0 32.3 20.5 34.0 21.9 35.0C23.2 36.0 24.6 36.4 27.3 36.6C30.1 36.9 35.6 36.2 38.3 36.4C40.9 36.5 42.8 37.1 43.2 37.7C43.6 38.3 42.2 39.1 40.5 39.9C38.7 40.7 35.6 42.1 32.8 42.6C30.0 43.2 26.6 43.0 23.5 43.2C24.1 44.8 24.6 46.5 25.2 48.1C27.7 48.1 29.7 48.5 32.8 48.1C35.9 47.7 40.6 47.0 43.7 45.9C46.9 44.8 50.1 43.2 51.9 41.6C53.8 39.9 54.7 37.7 54.7 36.1C54.7 34.4 53.8 32.8 51.9 31.7C50.1 30.6 46.7 29.8 43.7 29.5C40.7 29.2 36.1 30.1 33.9 29.8C31.7 29.5 30.6 28.7 30.6 27.9C30.6 27.1 30.7 25.8 33.9 25.2C37.1 24.5 44.7 24.4 50.0 24.1C49.4 22.4 48.8 20.8 48.1 19.1Z" fill="#ffffff"/></svg>
<span class="t" style="left:2349.500px;top:1315.700px;font:bold 22px 'Liberation Sans','Noto Sans CJK SC',sans-serif;line-height:1;color:#0b6cd9">中</span>
<svg style="left:2386px;top:1316px;" width="22" height="22" viewBox="0 0 22 22"><circle cx="6.600" cy="6.800" r="2.700" fill="none" stroke="#0b6cd9" stroke-width="2.200"/><circle cx="16.400" cy="11.800" r="2.900" fill="#0b6cd9"/><path d="M19.300 11.800c0.200 3.300-1.500 5.700-4.600 7.300l-0.900-1.100c1.800-1.300 2.700-2.700 2.800-4.300z" fill="#0b6cd9"/></svg>
<svg style="left:2422px;top:1313px;" width="22" height="27" viewBox="0 0 22 27"><rect x="7" y="1.800" width="8" height="14.500" rx="4" fill="#0b6cd9"/><path d="M2.800 11.500c0 5.500 3.600 8.500 8.200 8.500s8.200-3 8.200-8.500" stroke="#0b6cd9" stroke-width="1.700" fill="none"/><rect x="8" y="22.600" width="6" height="1.900" rx="0.900" fill="#0b6cd9"/></svg>
<svg style="left:2457px;top:1317px;" width="24" height="20" viewBox="0 0 24 20"><rect x="1.600" y="1.600" width="20.800" height="16.300" rx="2.200" fill="none" stroke="#0b6cd9" stroke-width="1.800"/><g fill="#0b6cd9"><rect x="4.300" y="4.500" width="2.700" height="2.600"/><rect x="8.200" y="4.500" width="2.700" height="2.600"/><rect x="12.100" y="4.500" width="2.700" height="2.600"/><rect x="16" y="4.500" width="3.700" height="2.600"/><rect x="4.300" y="8.400" width="2.700" height="2.600"/><rect x="8.200" y="8.400" width="2.700" height="2.600"/><rect x="12.100" y="8.400" width="2.700" height="2.600"/><rect x="16" y="8.400" width="3.700" height="2.600"/><rect x="4.300" y="12.300" width="2.700" height="2.700"/><rect x="8.200" y="12.300" width="11.500" height="2.700"/></g></svg>
<svg style="left:2493px;top:1315px;" width="24" height="23" viewBox="0 0 24 23"><path d="M7.500 1.300c1.200 2.300 7.800 2.300 9 0l6.200 2.400c0.700 2 0.700 4.300 0 6.500l-4-0.600v10.300c-2.500 1.400-10.900 1.400-13.400 0v-10.300l-4 0.600c-0.700-2.200-0.700-4.500 0-6.500z" fill="#0b6cd9"/></svg>
<svg style="left:2530px;top:1316px;" width="22" height="21" viewBox="0 0 22 21"><defs><linearGradient id="q1" x1="0" y1="0" x2="1" y2="1"><stop offset="0" stop-color="#8a6df7"/><stop offset="1" stop-color="#4a6ff1"/></linearGradient><linearGradient id="q2" x1="0" y1="0" x2="1" y2="1"><stop offset="0" stop-color="#c8587e"/><stop offset="1" stop-color="#5a6af0"/></linearGradient></defs><rect x="1" y="1" width="8.500" height="8.500" rx="1.800" fill="url(#q1)"/><rect x="11.500" y="1" width="8.500" height="8.500" rx="1.800" fill="#5b68f0"/><rect x="14.600" y="3.800" width="3" height="3" fill="#ffffff"/><rect x="1" y="11.300" width="8.500" height="8.500" rx="1.800" fill="url(#q2)"/><rect x="11.500" y="11.300" width="8.500" height="8.500" rx="1.800" fill="#4f6cf0"/></svg>
</body></html>
